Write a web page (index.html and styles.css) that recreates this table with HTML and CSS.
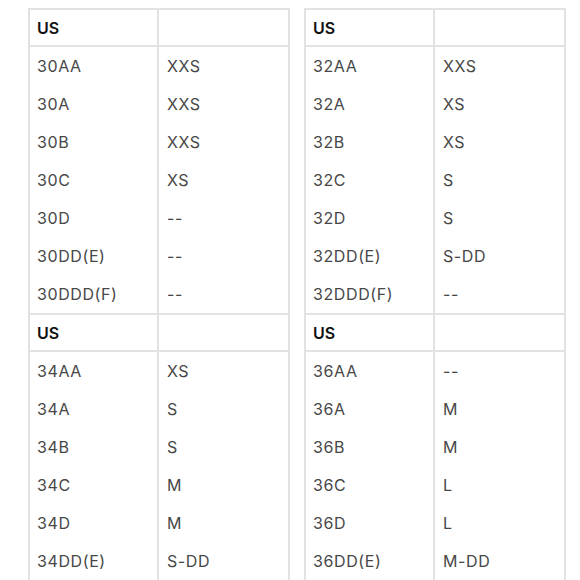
FILE: index.html
```html
<!DOCTYPE html>
<html>
<head>
<meta charset="utf-8">
<link rel="stylesheet" href="styles.css">
</head>
<body>
<div class="page">
  <table class="size">
    <tr><th>US</th><th></th></tr>
    <tr><td>30AA</td><td>XXS</td></tr>
    <tr><td>30A</td><td>XXS</td></tr>
    <tr><td>30B</td><td>XXS</td></tr>
    <tr><td>30C</td><td>XS</td></tr>
    <tr><td>30D</td><td>--</td></tr>
    <tr><td>30DD(E)</td><td>--</td></tr>
    <tr><td>30DDD(F)</td><td>--</td></tr>
  </table>
  <table class="size">
    <tr><th>US</th><th></th></tr>
    <tr><td>32AA</td><td>XXS</td></tr>
    <tr><td>32A</td><td>XS</td></tr>
    <tr><td>32B</td><td>XS</td></tr>
    <tr><td>32C</td><td>S</td></tr>
    <tr><td>32D</td><td>S</td></tr>
    <tr><td>32DD(E)</td><td>S-DD</td></tr>
    <tr><td>32DDD(F)</td><td>--</td></tr>
  </table>
  <table class="size lower">
    <tr><th>US</th><th></th></tr>
    <tr><td>34AA</td><td>XS</td></tr>
    <tr><td>34A</td><td>S</td></tr>
    <tr><td>34B</td><td>S</td></tr>
    <tr><td>34C</td><td>M</td></tr>
    <tr><td>34D</td><td>M</td></tr>
    <tr><td>34DD(E)</td><td>S-DD</td></tr>
  </table>
  <table class="size lower">
    <tr><th>US</th><th></th></tr>
    <tr><td>36AA</td><td>--</td></tr>
    <tr><td>36A</td><td>M</td></tr>
    <tr><td>36B</td><td>M</td></tr>
    <tr><td>36C</td><td>L</td></tr>
    <tr><td>36D</td><td>L</td></tr>
    <tr><td>36DD(E)</td><td>M-DD</td></tr>
  </table>
</div>
</body>
</html>
```
FILE: styles.css
```css
html, body {
  margin: 0;
  padding: 0;
  background: #fff;
  height: 580px;
  overflow: hidden;
}
body {
  font-family: Inter, "Noto Sans", sans-serif;
  font-size: 16px;
  color: #474747;
}
.page {
  display: grid;
  grid-template-columns: 262px 262px;
  column-gap: 14px;
  align-items: start;
  padding: 8px 0 0 28px;
}
.size {
  border-collapse: separate;
  border-spacing: 0;
  border: 2px solid #e2e2e2;
  width: 262px;
  table-layout: fixed;
}
.size.lower {
  border-top: none;
  border-bottom: none;
}
.size th, .size td {
  padding: 0 0 0 8px;
  text-align: left;
  vertical-align: middle;
  white-space: nowrap;
}
.size th {
  height: 35px;
  font-weight: 600;
  color: #111;
  border-bottom: 2px solid #e2e2e2;
}
.size td {
  height: 38px;
  font-weight: 400;
  letter-spacing: 0.6px;
}
.size th:first-child, .size td:first-child {
  border-right: 2px solid #e2e2e2;
  width: 120px;
  padding-left: 7px;
}
```
